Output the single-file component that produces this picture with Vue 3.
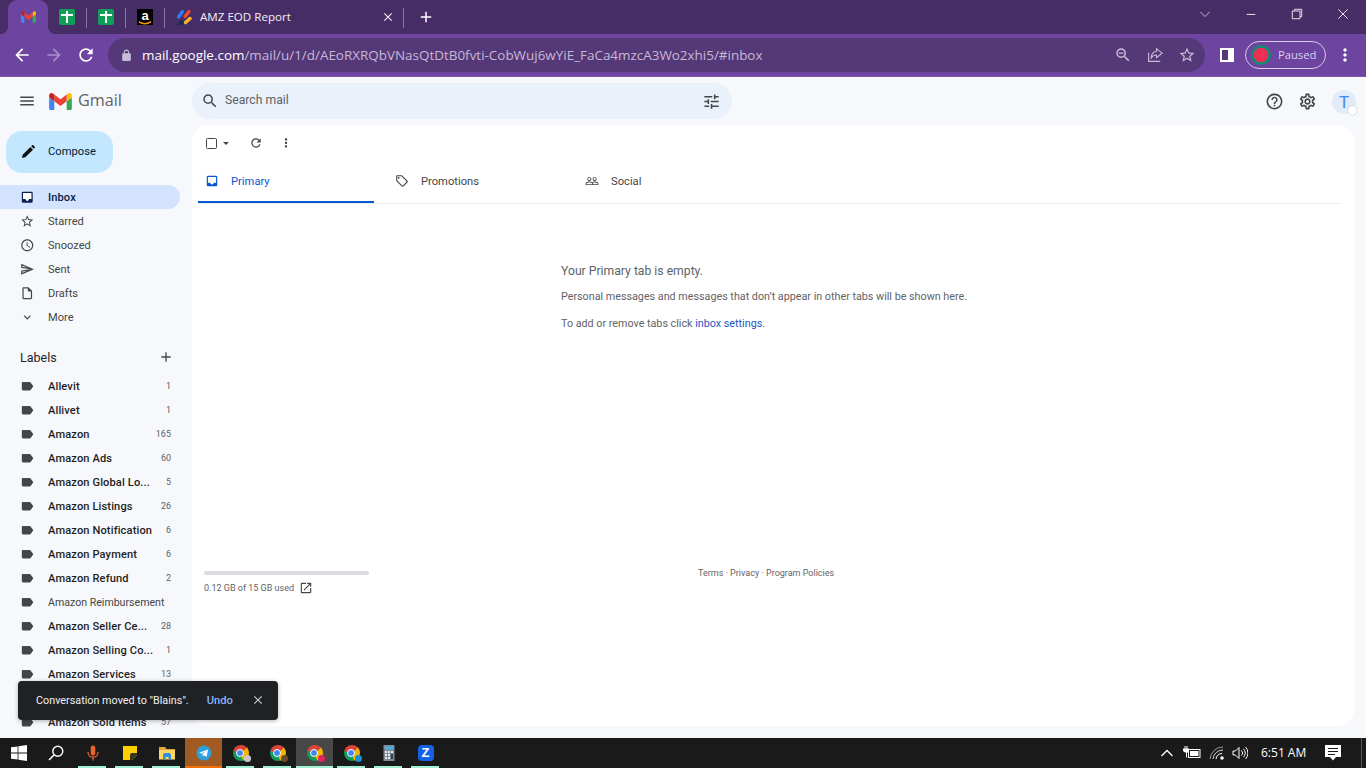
<script setup>
const I = {
  menu: 'M3 18h18v-2H3v2zm0-5h18v-2H3v2zm0-7v2h18V6H3z',
  search: 'M15.5 14h-.79l-.28-.27A6.471 6.471 0 0 0 16 9.5 6.5 6.5 0 1 0 9.5 16c1.61 0 3.09-.59 4.23-1.57l.27.28v.79l5 4.99L20.49 19l-4.99-5zm-6 0C7.01 14 5 11.99 5 9.5S7.01 5 9.5 5 14 7.01 14 9.5 11.99 14 9.5 14z',
  tune: 'M3 17v2h6v-2H3zM3 5v2h10V5H3zm10 16v-2h8v-2h-8v-2h-2v6h2zM7 9v2H3v2h4v2h2V9H7zm14 4v-2H11v2h10zm-6-4h2V7h4V5h-4V3h-2v6z',
  help: 'M11 18h2v-2h-2v2zm1-16C6.48 2 2 6.48 2 12s4.48 10 10 10 10-4.48 10-10S17.52 2 12 2zm0 18c-4.41 0-8-3.59-8-8s3.59-8 8-8 8 3.59 8 8-3.59 8-8 8zm0-14c-2.21 0-4 1.79-4 4h2c0-1.1.9-2 2-2s2 .9 2 2c0 2-3 1.75-3 5h2c0-2.25 3-2.5 3-5 0-2.21-1.79-4-4-4z',
  gear: 'M19.43 12.98c.04-.32.07-.64.07-.98 0-.34-.03-.66-.07-.98l2.11-1.65c.19-.15.24-.42.12-.64l-2-3.46c-.09-.16-.26-.25-.44-.25-.06 0-.12.01-.17.03l-2.49 1c-.52-.4-1.08-.73-1.69-.98l-.38-2.65C14.46 2.18 14.25 2 14 2h-4c-.25 0-.46.18-.49.42l-.38 2.65c-.61.25-1.17.59-1.69.98l-2.49-1c-.06-.02-.12-.03-.18-.03-.17 0-.34.09-.43.25l-2 3.46c-.13.22-.07.49.12.64l2.11 1.65c-.04.32-.07.65-.07.98 0 .33.03.66.07.98l-2.11 1.65c-.19.15-.24.42-.12.64l2 3.46c.09.16.26.25.44.25.06 0 .12-.01.17-.03l2.49-1c.52.4 1.08.73 1.69.98l.38 2.65c.03.24.24.42.49.42h4c.25 0 .46-.18.49-.42l.38-2.65c.61-.25 1.17-.59 1.69-.98l2.49 1c.06.02.12.03.18.03.17 0 .34-.09.43-.25l2-3.46c.12-.22.07-.49-.12-.64l-2.11-1.65zm-1.98-1.71c.04.31.05.52.05.73 0 .21-.02.43-.05.73l-.14 1.13.89.7 1.08.84-.7 1.21-1.27-.51-1.04-.42-.9.68c-.43.32-.84.56-1.25.73l-1.06.43-.16 1.13-.2 1.35h-1.4l-.19-1.35-.16-1.13-1.06-.43c-.43-.18-.83-.41-1.23-.71l-.91-.7-1.06.43-1.27.51-.7-1.21 1.08-.84.89-.7-.14-1.13c-.03-.31-.05-.54-.05-.74s.02-.43.05-.73l.14-1.13-.89-.7-1.08-.84.7-1.21 1.27.51 1.04.42.9-.68c.43-.32.84-.56 1.25-.73l1.06-.43.16-1.13.2-1.35h1.39l.19 1.35.16 1.13 1.06.43c.43.18.83.41 1.23.71l.91.7 1.06-.43 1.27-.51.7 1.21-1.07.85-.89.7.14 1.13zM12 8c-2.21 0-4 1.79-4 4s1.79 4 4 4 4-1.79 4-4-1.79-4-4-4zm0 6c-1.1 0-2-.9-2-2s.9-2 2-2 2 .9 2 2-.9 2-2 2z',
  star: 'M22 9.24l-7.19-.62L12 2 9.19 8.63 2 9.24l5.46 4.73L5.82 21 12 17.27 18.18 21l-1.63-7.03L22 9.24zM12 15.4l-3.76 2.27 1-4.28-3.32-2.88 4.38-.38L12 6.1l1.71 4.04 4.38.38-3.32 2.88 1 4.28L12 15.4z',
  clock: 'M11.99 2C6.47 2 2 6.48 2 12s4.47 10 9.99 10C17.52 22 22 17.52 22 12S17.52 2 11.99 2zM12 20c-4.42 0-8-3.58-8-8s3.58-8 8-8 8 3.58 8 8-3.58 8-8 8zm.5-13H11v6l5.25 3.15.75-1.23-4.5-2.67z',
  sent: 'M4.01 6.03l7.51 3.22-7.52-1 .01-2.22m7.5 8.72L4 17.97v-2.22l7.51-1M2.01 3L2 10l15 2-15 2 .01 7L23 12 2.01 3z',
  draft: 'M14 2H6c-1.1 0-1.99.9-1.99 2L4 20c0 1.1.89 2 1.99 2H18c1.1 0 2-.9 2-2V8l-6-6zM6 20V4h7v5h5v11H6z',
  more: 'M16.59 8.59L12 13.17 7.41 8.59 6 10l6 6 6-6z',
  label: 'M17.63 5.84C17.27 5.33 16.67 5 16 5L5 5.01C3.9 5.01 3 5.9 3 7v10c0 1.1.9 1.99 2 1.99L16 19c.67 0 1.27-.33 1.63-.84L22 12l-4.37-6.16z',
  plus: 'M19 13h-6v6h-2v-6H5v-2h6V5h2v6h6v2z',
  close: 'M19 6.41L17.59 5 12 10.59 6.41 5 5 6.41 10.59 12 5 17.59 6.41 19 12 13.41 17.59 19 19 17.59 13.41 12z',
  refresh: 'M17.65 6.35A7.958 7.958 0 0 0 12 4c-4.42 0-7.99 3.58-7.99 8s3.57 8 7.99 8c3.73 0 6.84-2.55 7.73-6h-2.08A5.99 5.99 0 0 1 12 18c-3.31 0-6-2.69-6-6s2.69-6 6-6c1.66 0 3.14.69 4.22 1.78L13 11h7V4l-2.35 2.35z',
  vert: 'M12 8c1.1 0 2-.9 2-2s-.9-2-2-2-2 .9-2 2 .9 2 2 2zm0 2c-1.1 0-2 .9-2 2s.9 2 2 2 2-.9 2-2-.9-2-2-2zm0 6c-1.1 0-2 .9-2 2s.9 2 2 2 2-.9 2-2-.9-2-2-2z',
  tag: 'M21.41 11.58l-9-9C12.05 2.22 11.55 2 11 2H4c-1.1 0-2 .9-2 2v7c0 .55.22 1.05.59 1.42l9 9c.36.36.86.58 1.41.58s1.05-.22 1.41-.59l7-7c.37-.36.59-.86.59-1.41s-.23-1.06-.59-1.42zM13 20.01L4 11V4h7v-.01l9 8.99-7 7.02zM6.5 5a1.5 1.5 0 1 0 0 3 1.5 1.5 0 0 0 0-3z',
  people: 'M16.5 13c-1.2 0-3.07.34-4.5 1-1.43-.67-3.3-1-4.5-1C5.33 13 1 14.08 1 16.25V19h22v-2.75c0-2.17-4.33-3.25-6.5-3.25zm-4 4.5h-10v-1.25c0-.54 2.56-1.75 5-1.75s5 1.21 5 1.75v1.25zm9 0H14v-1.25c0-.46-.2-.86-.52-1.22.88-.3 1.96-.53 3.02-.53 2.44 0 5 1.21 5 1.75v1.25zM7.5 12c1.93 0 3.5-1.57 3.5-3.5S9.43 5 7.5 5 4 6.57 4 8.5 5.57 12 7.5 12zm0-5.5c1.1 0 2 .9 2 2s-.9 2-2 2-2-.9-2-2 .9-2 2-2zm9 5.5c1.93 0 3.5-1.57 3.5-3.5S18.43 5 16.5 5 13 6.57 13 8.5s1.57 3.5 3.5 3.5zm0-5.5c1.1 0 2 .9 2 2s-.9 2-2 2-2-.9-2-2 .9-2 2-2z',
  open: 'M19 19H5V5h7V3H5a2 2 0 0 0-2 2v14a2 2 0 0 0 2 2h14c1.1 0 2-.9 2-2v-7h-2v7zM14 3v2h3.59l-9.83 9.83 1.41 1.41L19 6.41V10h2V3h-7z',
  pencil: 'M3 21l1-5L15.5 4.500 19.500 8.500 8 20zM16.800 3.200l1.200-1.200a1.400 1.400 0 0 1 2 0l2 2a1.400 1.400 0 0 1 0 2l-1.200 1.200z',
  lock: 'M18 8h-1V6c0-2.76-2.24-5-5-5S7 3.24 7 6v2H6c-1.1 0-2 .9-2 2v10c0 1.1.9 2 2 2h12c1.1 0 2-.9 2-2V10c0-1.1-.9-2-2-2zM9 6c0-1.66 1.34-3 3-3s3 1.34 3 3v2H9V6z',
  back: 'M20 11H7.83l5.59-5.59L12 4l-8 8 8 8 1.41-1.41L7.83 13H20v-2z',
  fwd: 'M12 4l-1.41 1.41L16.17 11H4v2h12.17l-5.58 5.59L12 20l8-8z',
  zoomOut: 'M15.5 14h-.79l-.28-.27A6.471 6.471 0 0 0 16 9.5 6.5 6.5 0 1 0 9.5 16c1.61 0 3.09-.59 4.23-1.57l.27.28v.79l5 4.99L20.49 19l-4.99-5zm-6 0C7.01 14 5 11.99 5 9.5S7.01 5 9.5 5 14 7.01 14 9.5 11.99 14 9.5 14zM6.500 8.700h6v1.600h-6z'
}
const nav = [
  { t: 'Starred', i: 'star' }, { t: 'Snoozed', i: 'clock' }, { t: 'Sent', i: 'sent' },
  { t: 'Drafts', i: 'draft' }, { t: 'More', i: 'more' }
]
const labels = [
  ['Allevit', '1'], ['Allivet', '1'], ['Amazon', '165'], ['Amazon Ads', '60'],
  ['Amazon Global Lo...', '5'], ['Amazon Listings', '26'], ['Amazon Notification', '6'],
  ['Amazon Payment', '6'], ['Amazon Refund', '2'], ['Amazon Reimbursement', ''],
  ['Amazon Seller Ce...', '28'], ['Amazon Selling Co...', '1'], ['Amazon Services', '13'],
  ['', ''], ['Amazon Sold Items', '57']
]
const tabs = [
  { t: 'Primary', i: 'inbox', on: true }, { t: 'Promotions', i: 'tag' }, { t: 'Social', i: 'people' }
]
const tasks = [
  { k: 'win' }, { k: 'search' }, { k: 'mic', u: 1 }, { k: 'note', u: 1 }, { k: 'folder', u: 1 },
  { k: 'tg', u: 2 }, { k: 'chrome', b: '#c9c9c9', u: 1 }, { k: 'chrome', b: '#6b4a2a', u: 1 },
  { k: 'chrome', b: '#e0245e', u: 3 }, { k: 'chrome', b: '#1a8fd8', u: 1 }, { k: 'calc', u: 1 }, { k: 'zoom', u: 1 }
]
const seeds = [[12, 5.500], [16.600, 7.400], [18.500, 12], [16.600, 16.600], [12, 18.500], [7.400, 16.600], [5.500, 12], [7.400, 7.400]]
</script>

<template>
  <div class="screen">
    <header class="strip">
      <div class="tab active">
        <svg class="gm-small" viewBox="52 42 88 66"><path fill="#4285f4" d="M58 108h14V74L52 59v43c0 3.32 2.69 6 6 6"/><path fill="#34a853" d="M120 108h14c3.32 0 6-2.69 6-6V59l-20 15"/><path fill="#fbbc04" d="M120 48v26l20-15v-8c0-7.42-8.47-11.65-14.4-7.2"/><path fill="#ea4335" d="M72 74V48l24 18 24-18v26L96 92"/><path fill="#c5221f" d="M52 51v8l20 15V48l-5.6-4.2c-5.94-4.45-14.4-.22-14.4 7.2"/></svg>
      </div>
      <div class="tab sep-r"><span class="sheet"></span></div>
      <div class="tab sep-r"><span class="sheet"></span></div>
      <div class="tab sep-r">
        <span class="amz">a<svg class="smile" viewBox="0 0 14 4"><path d="M1 .6c3.5 2.6 8 2.6 12 0" fill="none" stroke="#f90" stroke-width="1.5"/></svg></span>
      </div>
      <div class="tab wide sep-r">
        <svg class="fav" viewBox="0 0 16 16"><g stroke-width="3.4" stroke-linecap="round"><path d="M2.500 8 6.500 2.500" stroke="#2b7de9"/><path d="M9 7.500 13 2.500" stroke="#ee4a2f"/><path d="M9.500 13.500 14 9.500" stroke="#f7b321"/></g><path d="M1 16 4.500 11.500h3V16z" fill="#1b2a5b"/></svg>
        <span class="tab-title">AMZ EOD Report</span>
        <svg class="tab-x" viewBox="0 0 24 24"><path :d="I.close"/></svg>
      </div>
      <svg class="new-tab" viewBox="0 0 24 24"><path :d="I.plus"/></svg>
      <div class="win-ctl">
        <svg class="wc" viewBox="0 0 14 14"><path d="M1.500 4.500 7 10l5.500-5.500" fill="none" stroke="#d9cfe6" stroke-width="1"/></svg>
        <svg class="wc" viewBox="0 0 14 14"><path d="M2 7.500h10" stroke="#fff" stroke-width="1"/></svg>
        <svg class="wc" viewBox="0 0 14 14"><path d="M4 3V1.500h8.500V10H10.500M1.500 3.500h9v9h-9z" fill="none" stroke="#fff" stroke-width="1"/></svg>
        <svg class="wc" viewBox="0 0 14 14"><path d="M1.500 1.500l11 11M12.500 1.500l-11 11" stroke="#fff" stroke-width="1"/></svg>
      </div>
    </header>

    <div class="toolbar">
      <svg class="tb white" viewBox="0 0 24 24"><path :d="I.back"/></svg>
      <svg class="tb dim" viewBox="0 0 24 24"><path :d="I.fwd"/></svg>
      <svg class="tb white" viewBox="0 0 24 24"><path :d="I.refresh"/></svg>
      <div class="omni">
        <svg class="lock" viewBox="0 0 24 24"><path :d="I.lock"/></svg>
        <div class="url"><span class="host">mail.google.com</span>/mail/u/1/d/AEoRXRQbVNasQtDtB0fvti-CobWuj6wYiE_FaCa4mzcA3Wo2xhi5/#inbox</div>
        <svg class="omi" viewBox="0 0 24 24"><path :d="I.zoomOut"/></svg>
        <svg class="omi share" viewBox="0 0 24 24"><path d="M3.500 9v11.500H19M14 3.500l7.500 6-7.500 6V12c-4 0-6 1.500-7.500 5 .5-6 3-9.500 7.500-10z"/></svg>
        <svg class="omi" viewBox="0 0 24 24"><path :d="I.star"/></svg>
      </div>
      <div class="panel-ic"><i></i></div>
      <div class="paused">
        <svg class="melon" viewBox="0 0 24 24"><circle cx="12" cy="12" r="12" fill="#128a72"/><circle cx="12" cy="12" r="8.800" fill="#ef2f57"/><circle v-for="(s, i) in seeds" :key="i" :cx="s[0]" :cy="s[1]" r=".5" fill="#8a1a3a"/></svg>
        <span>Paused</span>
      </div>
      <svg class="tb kebab" viewBox="0 0 24 24"><path :d="I.vert"/></svg>
    </div>

    <div class="gmail">
      <div class="gm-head">
        <div class="brand">
          <svg class="gi hamb" viewBox="0 0 24 24"><path :d="I.menu"/></svg>
          <svg class="logo" viewBox="52 42 88 66"><path fill="#4285f4" d="M58 108h14V74L52 59v43c0 3.32 2.69 6 6 6"/><path fill="#34a853" d="M120 108h14c3.32 0 6-2.69 6-6V59l-20 15"/><path fill="#fbbc04" d="M120 48v26l20-15v-8c0-7.42-8.47-11.65-14.4-7.2"/><path fill="#ea4335" d="M72 74V48l24 18 24-18v26L96 92"/><path fill="#c5221f" d="M52 51v8l20 15V48l-5.6-4.2c-5.94-4.45-14.4-.22-14.4 7.2"/></svg>
          <span class="wordmark">Gmail</span>
        </div>
        <div class="search">
          <svg class="gi s18 dark" viewBox="0 0 24 24"><path :d="I.search"/></svg>
          <span class="s-text">Search mail</span>
          <svg class="gi s19 dark" viewBox="0 0 24 24"><path :d="I.tune"/></svg>
        </div>
        <div class="head-r">
          <svg class="gi s19 dark" viewBox="0 0 24 24"><path :d="I.help"/></svg>
          <svg class="gi s19 dark" viewBox="0 0 24 24"><path :d="I.gear"/></svg>
          <div class="avatar">T<span class="badge"></span></div>
        </div>
      </div>

      <div class="gm-body">
        <aside class="side">
          <div class="compose">
            <svg class="gi pen" viewBox="0 0 24 24"><path :d="I.pencil"/></svg>
            <span>Compose</span>
          </div>
          <nav class="nav">
            <div class="row inbox">
              <svg class="gi rowi" viewBox="0 0 24 24"><path fill="#0b2050" d="M5 3h14a2 2 0 0 1 2 2v14a2 2 0 0 1-2 2H5a2 2 0 0 1-2-2V5a2 2 0 0 1 2-2z"/><path fill="#fff" d="M5 5h14v10h-4a3 3 0 0 1-6 0H5z"/></svg>
              <span>Inbox</span>
            </div>
            <div v-for="n in nav" :key="n.t" class="row">
              <svg class="gi rowi" viewBox="0 0 24 24"><path :d="I[n.i]"/></svg>
              <span>{{ n.t }}</span>
            </div>
          </nav>
          <div class="lab-head">
            <span>Labels</span>
            <svg class="gi s16" viewBox="0 0 24 24"><path :d="I.plus"/></svg>
          </div>
          <div class="labels">
            <div v-for="(l, i) in labels" :key="i" class="row lab" :class="{ bold: l[1] }">
              <svg class="gi rowi" viewBox="0 0 24 24"><path :d="I.label"/></svg>
              <span class="lname">{{ l[0] }}</span>
              <span class="count">{{ l[1] }}</span>
            </div>
          </div>
        </aside>

        <main class="card">
          <div class="actions">
            <span class="check"></span>
            <span class="caret"></span>
            <svg class="gi s14 refresh" viewBox="0 0 24 24"><path :d="I.refresh"/></svg>
            <svg class="gi s14 vert" viewBox="0 0 24 24"><path :d="I.vert"/></svg>
          </div>
          <div class="tabs">
            <div v-for="t in tabs" :key="t.t" class="gtab" :class="{ on: t.on }">
              <svg v-if="t.i === 'inbox'" class="gi tabi" viewBox="0 0 24 24"><path fill="#0b57d0" d="M5 3h14a2 2 0 0 1 2 2v14a2 2 0 0 1-2 2H5a2 2 0 0 1-2-2V5a2 2 0 0 1 2-2z"/><path fill="#fff" d="M5 5h14v10h-4a3 3 0 0 1-6 0H5z"/></svg>
              <svg v-else class="gi tabi" viewBox="0 0 24 24"><path :d="I[t.i]"/></svg>
              <span>{{ t.t }}</span>
            </div>
          </div>
          <section class="empty">
            <h2>Your Primary tab is empty.</h2>
            <p>Personal messages and messages that don’t appear in other tabs will be shown here.</p>
            <p>To add or remove tabs click <a>inbox settings</a>.</p>
          </section>
          <footer class="foot">
            <div class="storage">
              <div class="bar"></div>
              <div class="used">
                <span>0.12 GB of 15 GB used</span>
                <svg class="gi s12" viewBox="0 0 24 24"><path :d="I.open"/></svg>
              </div>
            </div>
            <div class="terms">Terms · Privacy · Program Policies</div>
          </footer>
        </main>
      </div>

      <div class="toast">
        <span class="t-msg">Conversation moved to "Blains".</span>
        <span class="t-undo">Undo</span>
        <svg class="t-x" viewBox="0 0 24 24"><path :d="I.close"/></svg>
      </div>
    </div>

    <div class="taskbar">
      <div class="apps">
        <div v-for="(a, i) in tasks" :key="i" class="app" :class="{ 'h-or': a.u === 2, 'h-gr': a.u === 3, 'u': a.u === 1 }">
          <svg v-if="a.k === 'win'" class="ti" viewBox="0 0 16 16"><path fill="#fff" d="M0 2.300 6.600 1.400v6.200H0zM7.400 1.300 16 0v7.600H7.400zM0 8.400h6.600v6.200L0 13.700zM7.400 8.400H16V16l-8.600-1.300z"/></svg>
          <svg v-else-if="a.k === 'search'" class="ti" viewBox="0 0 16 16"><circle cx="9.800" cy="6.200" r="5" fill="none" stroke="#fff" stroke-width="1.400"/><path d="M6.200 9.800 1 15" stroke="#fff" stroke-width="1.600"/></svg>
          <svg v-else-if="a.k === 'mic'" class="ti" viewBox="0 0 16 16"><rect x="5.700" y="0.500" width="4.600" height="10" rx="2.300" fill="#e8632c"/><path d="M3 7c0 3 2.200 5.200 5 5.200S13 10 13 7M8 12v3.500" fill="none" stroke="#e8632c" stroke-width="1.300"/></svg>
          <svg v-else-if="a.k === 'note'" class="ti" viewBox="0 0 16 16"><path fill="#ffcf00" d="M1 1h14v9l-5 5H1z"/><path fill="#3a3320" d="M15 8v2l-5 5H8V10a2 2 0 0 1 2-2z"/></svg>
          <svg v-else-if="a.k === 'folder'" class="ti" viewBox="0 0 16 16"><path fill="#e0a73a" d="M0 2h6l1.500 2H16v3H0z"/><path fill="#ffd564" d="M0 5h16v9.500H0z"/><path fill="#2f8fd8" d="M4 10l1-2h6l1 2v4.500H9.500V12h-3v2.500H4z"/></svg>
          <svg v-else-if="a.k === 'tg'" class="ti" viewBox="0 0 16 16"><circle cx="8" cy="8" r="7.500" fill="#2f9fd8"/><path fill="#fff" d="M3.200 7.800 12 4.400 10.600 12 8 10.200 6.800 11.400 6.500 9.200 10.300 6 5.400 8.700z"/></svg>
          <template v-else-if="a.k === 'chrome'">
            <span class="chrome"><i></i><b :style="{ background: a.b }"></b></span>
          </template>
          <svg v-else-if="a.k === 'calc'" class="ti" viewBox="0 0 16 16"><rect x="2.500" y="0" width="11" height="16" fill="#7f8c96"/><rect x="4" y="1.500" width="8" height="3" fill="#4fb0e6"/><g fill="#e6e9ec"><rect x="4" y="6" width="2" height="2"/><rect x="7" y="6" width="2" height="2"/><rect x="10" y="6" width="2" height="2"/><rect x="4" y="9" width="2" height="2"/><rect x="7" y="9" width="2" height="2"/><rect x="4" y="12" width="2" height="2"/><rect x="7" y="12" width="2" height="2"/></g><rect x="10" y="9" width="2" height="5" fill="#2f3d4a"/></svg>
          <span v-else-if="a.k === 'zoom'" class="zoom">Z</span>
        </div>
      </div>
      <div class="tray">
        <svg class="tr caret-up" viewBox="0 0 14 14"><path d="M1.500 10 7 4.500 12.500 10" fill="none" stroke="#fff" stroke-width="1.300"/></svg>
        <svg class="tr bat" viewBox="0 0 18 14"><path fill="#fff" d="M0 2.500h1.500V0h1v2.500h1V0h1v2.500H6v4H4v5H3v-5H2L0 5z"/><rect x="5.500" y="3.500" width="11.500" height="8" fill="none" stroke="#fff"/><rect x="7" y="5" width="8.500" height="5" fill="#fff"/></svg>
        <svg class="tr wifi" viewBox="0 0 16 14"><g fill="none" stroke="#fff" stroke-width="1"><path d="M1 13A13 13 0 0 1 14 1" opacity=".55"/><path d="M4 13A10 10 0 0 1 14 4" opacity=".8"/><path d="M7 13A6 6 0 0 1 13 7.500"/></g><circle cx="13" cy="12" r="1.800" fill="#fff"/></svg>
        <svg class="tr vol" viewBox="0 0 16 14"><g fill="none" stroke="#fff" stroke-width="1"><path d="M1 5h2.500L7 1.500v11L3.500 9H1z"/><path d="M9.500 4.500a3.500 3.500 0 0 1 0 5M11.500 2.800a6 6 0 0 1 0 8.400M13.500 1a8.500 8.500 0 0 1 0 12"/></g></svg>
        <span class="clock">6:51 AM</span>
        <svg class="tr notif" viewBox="0 0 16 16"><path fill="#fff" d="M0 0h16v12h-5l-3 3.500L5 12H0z"/><g stroke="#1b1b1b"><path d="M3 3.500h10M3 6.500h10M3 9.500h7"/></g></svg>
      </div>
    </div>
  </div>
</template>

<style scoped>
.screen { width: 1366px; height: 768px; display: flex; flex-direction: column; overflow: hidden; position: relative; font-family: Roboto, "Liberation Sans", sans-serif; background: #f6f8fc; }

.strip { height: 34px; flex: none; background: #472d66; display: flex; align-items: center; padding-left: 8px; box-sizing: border-box; }
.tab { height: 34px; width: 39px; flex: none; display: flex; align-items: center; justify-content: center; position: relative; box-sizing: border-box; padding-right: 1px; }
.tab.active { width: 40px; padding-right: 0; background: #6d44a0; border-radius: 9px 9px 0 0; }
.tab.active::before, .tab.active::after { content: ""; position: absolute; bottom: 0; width: 8px; height: 8px; }
.tab.active::before { left: -8px; background: radial-gradient(circle at 0 0, transparent 8px, #6d44a0 8.500px); }
.tab.active::after { right: -8px; background: radial-gradient(circle at 100% 0, transparent 8px, #6d44a0 8.500px); }
.sep-r::after { content: ""; position: absolute; right: 0; top: 8px; height: 20px; width: 1px; background: #8b77a3; }
.gm-small { width: 15px; height: 12px; }
.sheet { width: 16px; height: 16px; border-radius: 2px; background: #0f9d58; position: relative; }
.sheet::before { content: ""; position: absolute; left: 2px; right: 2px; top: 5px; height: 2px; background: #fff; }
.sheet::after { content: ""; position: absolute; left: 7px; width: 2px; top: 2px; bottom: 2px; background: #fff; }
.amz { width: 16px; height: 16px; background: #000; color: #fff; font: 700 13px/13px "Liberation Sans", sans-serif; text-align: center; position: relative; display: block; }
.smile { position: absolute; left: 1px; bottom: 0; width: 14px; height: 4px; }
.tab.wide { width: 239px; justify-content: flex-start; padding-left: 11px; padding-right: 0; }
.fav { width: 16px; height: 16px; flex: none; }
.tab-title { margin-left: 8px; font: 11.600px/16px "Open Sans", "Noto Sans", sans-serif; color: #f3eff8; flex: 1; }
.tab-x { width: 14px; height: 14px; fill: #f1ecf6; margin-right: 9px; }
.new-tab { width: 18px; height: 18px; fill: #fff; margin-left: 13px; }
.win-ctl { margin-left: auto; display: flex; }
.wc { width: 12px; height: 12px; padding: 9px 17px; margin-top: -6px; }

.toolbar { height: 43px; flex: none; background: #6d44a0; display: flex; align-items: center; padding-left: 12px; box-sizing: border-box; border-bottom: 1px solid #7a57a8; }
.tb { width: 20px; height: 20px; flex: none; margin-right: 12px; }
.white { fill: #fff; }
.dim { fill: #a88fc8; }
.omni { width: 1097px; height: 34px; margin-right: 12px; background: #553878; border-radius: 17px; display: flex; align-items: center; padding: 0 9px 0 12px; box-sizing: border-box; flex: none; }
.lock { width: 13px; height: 13px; fill: #c8bcd6; flex: none; }
.url { margin-left: 9px; font: 13.450px/20px "Open Sans", "Noto Sans", sans-serif; color: #c6b9d6; white-space: nowrap; flex: 1; overflow: hidden; }
.host { color: #fff; }
.omi { width: 18px; height: 18px; fill: #c8bcd6; flex: none; margin-left: 14px; }
.share { fill: none; stroke: #c8bcd6; stroke-width: 1.500; }
.panel-ic { width: 14px; height: 14px; background: #fff; flex: none; margin-left: 3px; padding: 2px; box-sizing: border-box; }
.panel-ic i { display: block; width: 6px; height: 10px; background: #553878; }
.paused { margin-left: 11px; width: 81px; height: 28px; flex: none; box-sizing: border-box; border: 1px solid #d8cce8; border-radius: 14px; display: flex; align-items: center; padding-left: 5px; gap: 7px; font: 11.200px/16px "Open Sans", "Noto Sans", sans-serif; color: #dcd0ee; }
.melon { width: 20px; height: 20px; flex: none; }
.kebab { fill: #fff; margin-left: 9px; margin-right: 0; }

.gmail { flex: 1; min-height: 0; display: flex; flex-direction: column; position: relative; overflow: hidden; }
.gm-head { height: 48px; flex: none; display: flex; align-items: center; }
.brand { width: 192px; flex: none; display: flex; align-items: center; padding-left: 18px; box-sizing: border-box; }
.gi { fill: #444746; flex: none; }
.hamb { width: 18px; height: 18px; }
.logo { width: 23px; height: 17px; margin-left: 13px; }
.wordmark { margin-left: 6px; padding-bottom: 2px; font-size: 16.200px; color: #5f6368; font-family: "Open Sans", Roboto, sans-serif; }
.search { width: 540px; height: 36px; flex: none; background: #eaf1fb; border-radius: 18px; display: flex; align-items: center; padding: 0 11px 0 9px; box-sizing: border-box; }
.s-text { margin-left: 6px; font-size: 12.200px; line-height: 14px; padding-bottom: 2px; color: #5f6368; flex: 1; }
.s16 { width: 16px; height: 16px; }
.s18 { width: 18px; height: 18px; }
.s19 { width: 19px; height: 19px; }
.s14 { width: 14px; height: 14px; }
.s12 { width: 14px; height: 14px; }
.dark { fill: #444746; }
.head-r { margin-left: auto; display: flex; align-items: center; gap: 14px; padding-right: 10px; }
.avatar { width: 24px; height: 24px; border-radius: 50%; background: #e1ebf9; color: #4285f4; font-size: 17px; line-height: 24px; text-align: center; position: relative; margin-left: 1px; margin-top: 2px; }
.badge { position: absolute; right: -1px; bottom: -1px; width: 9px; height: 9px; border-radius: 50%; background: #fff; box-shadow: 0 0 1px #888; }

.gm-body { flex: 1; min-height: 0; display: flex; }
.side { width: 192px; flex: none; overflow: hidden; }
.compose { margin: 6px 0 0 6px; width: 107px; height: 42px; background: #c2e7ff; border-radius: 16px; display: flex; align-items: center; padding-left: 14px; box-sizing: border-box; font-size: 11.200px; font-weight: 400; color: #001d35; gap: 12px; }
.compose span { padding-bottom: 2px; }
.pen { width: 16px; height: 16px; fill: #111; }
.nav { margin-top: 12px; }
.row { height: 24px; width: 180px; box-sizing: border-box; display: flex; align-items: center; padding: 0 9px 0 20px; font-size: 11.100px; color: #444746; }
.rowi { width: 14.500px; height: 14.500px; margin-right: 13.500px; }
.inbox { background: #d3e3fd; border-radius: 0 12px 12px 0; color: #041e49; font-weight: 500; letter-spacing: .1px; }
.lab-head { margin-top: 16px; height: 24px; width: 180px; box-sizing: border-box; padding: 0 6px 0 20px; display: flex; align-items: center; justify-content: space-between; font-size: 12.500px; color: #1f1f1f; }
.labels { margin-top: 5px; }
.lab.bold { color: #1f1f1f; font-weight: 500; letter-spacing: .12px; }
.lab:not(.bold) { font-size: 10.600px; }
.lname { flex: 1; min-width: 0; white-space: nowrap; }
.count { font-size: 9px; font-weight: 400; letter-spacing: 0; color: #5f6368; }

.card { flex: 1; margin: 0 12px 12px 0; background: #fff; border-radius: 16px; display: flex; flex-direction: column; min-width: 0; }
.actions { height: 36px; flex: none; display: flex; align-items: center; padding-left: 14px; }
.check { width: 9px; height: 9px; border: 1.500px solid #444746; border-radius: 1.500px; flex: none; }
.caret { width: 0; height: 0; border-left: 3.500px solid transparent; border-right: 3.500px solid transparent; border-top: 3.500px solid #444746; margin-left: 6px; }
.refresh { margin-left: 20px; }
.vert { margin-left: 16px; }
.tabs { height: 42px; flex: none; display: flex; gap: 14px; margin: 0 12px 0 6px; border-bottom: 1px solid #eceff1; }
.gtab { width: 176px; height: 42px; box-sizing: border-box; display: flex; align-items: center; padding-left: 7px; padding-bottom: 2px; font-size: 11.200px; font-weight: 400; color: #444746; gap: 12px; }
.gtab.on { color: #0b57d0; border-bottom: 2px solid #0b57d0; padding-top: 2px; padding-bottom: 2px; }
.tabi { width: 14px; height: 14px; }
.empty { flex: none; height: 367px; box-sizing: border-box; padding: 59px 0 0 369px; color: #5f6368; }
.empty h2 { margin: 0 0 11px; font-size: 12.200px; line-height: 16px; font-weight: 400; color: #5f6368; }
.empty p { margin: 0 0 14px; font-size: 10.750px; line-height: 13px; }
.empty a { color: #1a56c4; }
.foot { display: flex; padding-left: 12px; color: #5f6368; font-size: 9px; }
.storage { width: 165px; flex: none; }
.bar { height: 4px; background: #dadce0; border-radius: 2px; }
.used { margin-top: 6px; display: flex; align-items: center; gap: 5px; white-space: nowrap; }
.terms { margin-left: 329px; margin-top: -4px; line-height: 12px; }

.toast { position: absolute; left: 18px; top: 604px; width: 260px; height: 39px; background: #202124; border-radius: 4px; box-shadow: 0 1px 4px rgba(0,0,0,.3); display: flex; align-items: center; font-size: 10.800px; color: #f1f3f4; padding-left: 18px; box-sizing: border-box; }
.t-msg { white-space: nowrap; }
.t-undo { margin-left: 18px; color: #8ab4f8; font-size: 11.200px; font-weight: 500; }
.t-x { width: 14px; height: 14px; fill: #c9ccd0; position: absolute; left: 233px; top: 12px; }

.taskbar { height: 30px; flex: none; background: #1a1a1a; display: flex; align-items: stretch; }
.apps { display: flex; }
.app { width: 37px; height: 30px; display: flex; align-items: center; justify-content: center; position: relative; box-sizing: border-box; }
.ti { width: 16px; height: 16px; }
.u::after, .h-gr::after { content: ""; position: absolute; bottom: 0; left: 4px; right: 5px; height: 2px; background: #a3f0d2; }
.h-gr::after { left: 0; right: 0; }
.h-or { background: #a05a22; }
.h-or::after { content: ""; position: absolute; bottom: 0; left: 0; right: 0; height: 2px; background: #f07000; }
.h-gr { background: #484848; }
.chrome { width: 16px; height: 16px; border-radius: 50%; position: relative; background: conic-gradient(from -75deg, #db4437 0 120deg, #f4b400 120deg 240deg, #0f9d58 240deg 360deg); display: block; }
.chrome i { position: absolute; left: 3.500px; top: 3.500px; width: 6px; height: 6px; background: #4285f4; border-radius: 50%; border: 1.500px solid #fff; }
.chrome b { position: absolute; right: -2px; bottom: -1px; width: 7px; height: 7px; border-radius: 50%; }
.zoom { width: 16px; height: 16px; border-radius: 4px; background: #1461e8; color: #fff; font: 700 13px/16px "Liberation Sans", sans-serif; text-align: center; }
.tray { margin-left: auto; margin-right: 4px; display: flex; align-items: center; border-right: 1px solid #555; }
.tr { flex: none; }
.caret-up { width: 14px; height: 14px; margin-right: 9px; }
.bat { width: 18px; height: 14px; margin-right: 8px; }
.wifi { width: 16px; height: 14px; margin-right: 7px; }
.vol { width: 16px; height: 14px; margin-right: 13px; }
.clock { font: 12px/16px "Open Sans", "Noto Sans", sans-serif; color: #fff; width: 45px; white-space: nowrap; margin-right: 19px; }
.notif { width: 16px; height: 16px; margin-right: 20px; }
</style>

<style>
html, body { margin: 0; overflow: hidden; }
</style>
